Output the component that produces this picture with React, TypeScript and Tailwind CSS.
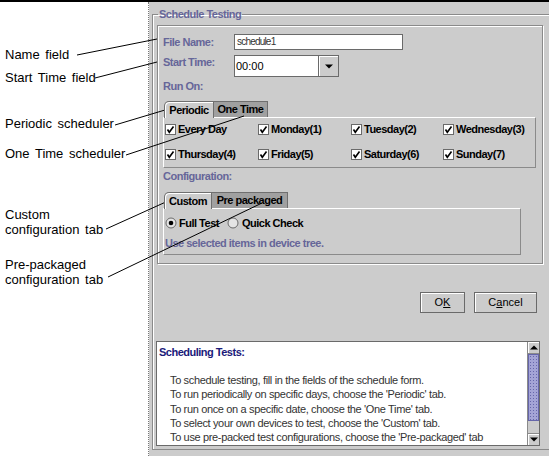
import React from "react";

const lbl = "text-[11px] font-bold tracking-[-0.5px] text-[#666699] leading-[13px]";

const days = [
  "Every Day",
  "Monday(1)",
  "Tuesday(2)",
  "Wednesday(3)",
  "Thursday(4)",
  "Friday(5)",
  "Saturday(6)",
  "Sunday(7)",
];

const helpLines = [
  "To schedule testing, fill in the fields of the schedule form.",
  "To run periodically on specific days, choose the 'Periodic' tab.",
  "To run once on a specific date, choose the 'One Time' tab.",
  "To select your own devices to test, choose the 'Custom' tab.",
  "To use pre-packed test configurations, choose the 'Pre-packaged' tab",
];

function CheckBox() {
  return (
    <svg width="11" height="11" viewBox="0 0 11 11" className="shrink-0">
      <rect x="0.5" y="0.5" width="10" height="10" fill="#fff" stroke="#6a6a6a" />
      <path d="M2.5 5.5 L4.3 8.3 L8.5 2.5" fill="none" stroke="#000" strokeWidth="1.6" />
    </svg>
  );
}

function Radio({ on }: { on?: boolean }) {
  return (
    <svg width="12" height="12" viewBox="0 0 12 12" className="shrink-0">
      <circle cx="6" cy="6" r="5" fill="#e4e4e4" stroke="#6a6a6a" />
      {on && <circle cx="6" cy="6" r="2.3" fill="#000" />}
    </svg>
  );
}

function Tab({ label, active, className }: { label: string; active?: boolean; className: string }) {
  return (
    <div
      className={`${className} h-[16px] flex items-center justify-center text-[11px] font-bold tracking-[-0.5px] text-black border-t border-r border-[#6f6f6f] ${
        active
          ? "relative z-10 -mb-px h-[17px] bg-[#cccccc] border-l rounded-tl-[5px] shadow-[inset_1px_1px_0_#fff]"
          : "bg-[#a0a0a0]"
      }`}
    >
      {label}
    </div>
  );
}

function Arrow({ up }: { up?: boolean }) {
  return (
    <svg width="8" height="5" viewBox="0 0 8 5">
      <polygon points={up ? "0,4.5 8,4.5 4,0.5" : "0,0.5 8,0.5 4,4.5"} fill="#000" />
    </svg>
  );
}

export default function App() {
  return (
    <div className="relative w-[549px] h-[456px] overflow-hidden bg-white font-['Liberation_Sans',Arial,sans-serif]">
      <div className="h-[2px] bg-black" />
      <div className="flex h-[454px]">
        <div className="w-[149px] shrink-0 border-r border-dotted border-[#777] pl-[5px] text-[13px] leading-[16px] text-black [word-spacing:2px]">
          <p className="mt-[45px]">Name field</p>
          <p className="mt-[7px]">Start Time field</p>
          <p className="mt-[30px]">Periodic scheduler</p>
          <p className="mt-[14px]">One Time scheduler</p>
          <p className="mt-[45px] leading-[15px]">
            Custom
            <br />
            configuration tab
          </p>
          <p className="mt-[20px] leading-[15px]">
            Pre-packaged
            <br />
            configuration tab
          </p>
        </div>

        <div className="flex-1 bg-[#cccccc] pl-[3px] pt-[6px]">
          <fieldset className="h-[442px] border border-r-0 border-[#8a8a8a] shadow-[inset_1px_1px_0_#fff]">
            <legend className={`ml-[5px] px-[1px] ${lbl}`}>Schedule Testing</legend>

            <div className="ml-[4px] mt-[4px] w-[386px] h-[239px] border border-[#8a8a8a] shadow-[inset_1px_1px_0_#fff,1px_1px_0_#fff] pl-[5px] pt-[8px]">
              <div className="flex items-center h-[16px]">
                <span className={`w-[71px] shrink-0 ${lbl}`}>File Name:</span>
                <div className="w-[169px] h-[16px] bg-white border border-[#6a6a6a] pl-[2px] text-[10px] leading-[14px] tracking-[-0.8px] text-[#333]">
                  schedule1
                </div>
              </div>

              <div className="flex items-start h-[22px] mt-[5px]">
                <span className={`w-[71px] shrink-0 mt-[1px] ${lbl}`}>Start Time:</span>
                <div className="w-[105px] h-[22px] flex bg-white border border-[#6a6a6a]">
                  <span className="flex-1 pl-[1px] text-[11px] leading-[20px] text-black">00:00</span>
                  <span className="w-[20px] flex items-center justify-center bg-[#cccccc] border-l border-[#6a6a6a] shadow-[inset_1px_1px_0_#fff]">
                    <Arrow />
                  </span>
                </div>
              </div>

              <p className={`mt-[3px] ${lbl}`}>Run On:</p>

              <div className="mt-[8px] flex pl-[1px] h-[16px] items-end">
                <Tab label="Periodic" active className="w-[50px]" />
                <Tab label="One Time" className="w-[54px]" />
              </div>
              <div className="w-[373px] h-[51px] border border-[#8a8a8a] border-t-white border-l-white pl-px">
                <div className="grid grid-cols-[93px_93px_92px_auto] gap-y-[3px]">
                  {days.map((d) => (
                    <div key={d} className="flex items-center gap-[2px] h-[22px]">
                      <CheckBox />
                      <span className="text-[11px] font-bold tracking-[-0.5px] text-black">{d}</span>
                    </div>
                  ))}
                </div>
              </div>

              <p className={`mt-[2px] ${lbl}`}>Configuration:</p>

              <div className="mt-[9px] flex pl-[1px] h-[16px] items-end">
                <Tab label="Custom" active className="w-[48px]" />
                <Tab label="Pre packaged" className="w-[76px]" />
              </div>
              <div className="w-[358px] h-[47px] border border-[#8a8a8a] border-t-white border-l-white pl-px pt-[6px]">
                <div className="flex items-center h-[16px] gap-[2px] text-[11px] font-bold tracking-[-0.5px] text-black">
                  <div className="w-[60px] shrink-0 flex items-center gap-[2px]">
                    <Radio on />
                    <span>Full Test</span>
                  </div>
                  <div className="flex items-center gap-[3px]">
                    <Radio />
                    <span>Quick Check</span>
                  </div>
                </div>
                <p className={`mt-[6px] ${lbl}`}>Use selected items in device tree.</p>
              </div>
            </div>

            <div className="mt-[28px] flex justify-end gap-[9px] pr-[12px]">
              <button className="w-[45px] h-[21px] bg-[#cccccc] border border-[#6a6a6a] shadow-[inset_1px_1px_0_#fff] text-[11px] text-black">
                O<span className="underline">K</span>
              </button>
              <button className="w-[63px] h-[21px] bg-[#cccccc] border border-[#6a6a6a] shadow-[inset_1px_1px_0_#fff] text-[11px] text-black">
                C<span className="underline">a</span>ncel
              </button>
            </div>

            <div className="mt-[28px] ml-[3px] w-[384px] h-[105px] flex bg-white border border-[#6a6a6a]">
              <div className="flex-1 pl-[2px] pt-[4px]">
                <p className="text-[11px] font-bold tracking-[-0.5px] leading-[13px] text-[#1a1a7a]">
                  Scheduling Tests:
                </p>
                <div className="mt-[14px] pl-[11px] text-[11px] leading-[14.3px] tracking-[-0.35px] text-[#333] whitespace-nowrap">
                  {helpLines.map((l) => (
                    <p key={l}>{l}</p>
                  ))}
                </div>
              </div>
              <div className="w-[12px] flex flex-col bg-[#cccccc] border-l border-[#8a8a8a]">
                <div className="h-[12px] flex items-center justify-center border-b border-[#8a8a8a] shadow-[inset_1px_1px_0_#fff]">
                  <Arrow up />
                </div>
                <div className="flex-1 bg-[#a4a4d6] border border-[#6666aa] bg-[radial-gradient(#6666aa_0.7px,transparent_0.9px)] bg-[length:3px_3px]" />
                <div className="h-[12px]" />
                <div className="h-[12px] flex items-center justify-center border-t border-[#8a8a8a] shadow-[inset_1px_1px_0_#fff]">
                  <Arrow />
                </div>
              </div>
            </div>
          </fieldset>
        </div>
      </div>

      <svg className="absolute inset-0 pointer-events-none" width="549" height="456">
        <g stroke="#000" strokeWidth="1" fill="none">
          <line x1="77" y1="55" x2="157" y2="39" />
          <line x1="95" y1="78" x2="157" y2="62" />
          <line x1="115" y1="125" x2="165" y2="110" />
          <line x1="126" y1="155" x2="244" y2="116" />
          <line x1="106" y1="229" x2="168" y2="201" />
          <line x1="108" y1="277" x2="262" y2="203" />
        </g>
      </svg>
    </div>
  );
}
